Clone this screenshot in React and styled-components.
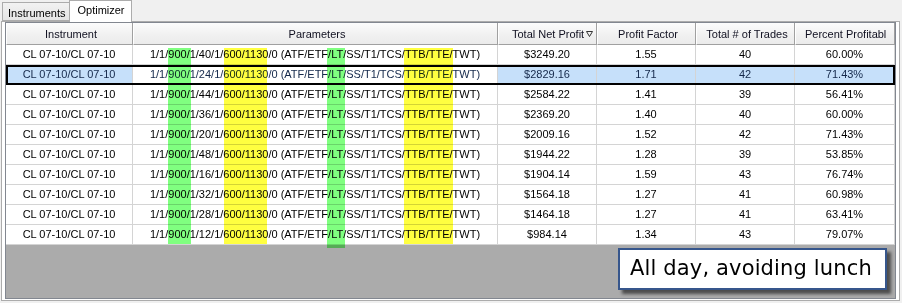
import React from 'react'
import styled, { createGlobalStyle } from 'styled-components';

const GlobalStyle = createGlobalStyle`
    html, body {
        margin: 0;
        padding: 0;
        background: #f0f0f0;
    }
    body {
        font-family: "Liberation Sans", Arial, sans-serif;
        font-size: 11px;
        color: #000;
    }
`;

const COLS = '127px 365px 99px 99px 99px 100px';

const Window = styled.div`
    width: 902px;
    height: 303px;
    overflow: hidden;
    background: #f0f0f0;
`;

const TabStrip = styled.div`
    display: flex;
    align-items: flex-end;
    height: 21px;
    padding-left: 2px;
`;

const Tab = styled.div`
    box-sizing: border-box;
    height: ${({ active }) => (active ? '22px' : '19px')};
    margin-bottom: ${({ active }) => (active ? '-1px' : '0')};
    margin-left: ${({ active }) => (active ? '-1px' : '0')};
    padding: ${({ active }) => (active ? '3px 6px 0 7px' : '4px 4px 0 5px')};
    border: 1px solid #acacac;
    border-bottom: ${({ active }) => (active ? 'none' : '1px solid #acacac')};
    background: ${({ active }) => (active ? '#ffffff' : 'linear-gradient(#f2f2f2, #e5e5e5)')};
    position: relative;
    z-index: ${({ active }) => (active ? 2 : 1)};
    white-space: nowrap;
`;

const Panel = styled.div`
    box-sizing: border-box;
    width: 899px;
    margin-left: 1px;
    height: 280px;
    padding: 0 3px 2px 3px;
    border: 1px solid #acacac;
    background: #ffffff;
`;

const Grid = styled.div`
    box-sizing: border-box;
    height: 277px;
    border: 1px solid #828790;
    background: #ababab;
    display: flex;
    flex-direction: column;
`;

const HeaderRow = styled.div`
    display: grid;
    grid-template-columns: ${COLS};
    height: 22px;
`;

const HeaderCell = styled.div`
    box-sizing: border-box;
    display: flex;
    align-items: center;
    justify-content: ${({ left }) => (left ? 'flex-start' : 'center')};
    padding: ${({ left }) => (left ? `0 ${left.r}px 0 ${left.l}px` : '0 0 0 3px')};
    border-left: 1px solid #ffffff;
    border-right: 1px solid #a0a0a0;
    border-bottom: 1px solid #a0a0a0;
    background: linear-gradient(#fcfcfc, #f1f1f1 55%, #ebebeb);
    color: #101020;
    white-space: nowrap;
    overflow: hidden;
`;

const SortGlyph = styled.svg`
    width: 7px;
    height: 6px;
    margin-left: 2px;
    flex: none;
`;

const Rows = styled.div`
    position: relative;
    background: #ffffff;
`;

const Row = styled.div`
    display: grid;
    grid-template-columns: ${COLS};
    height: 20px;
    background: ${({ selected }) => (selected ? '#c6e0fa' : '#ffffff')};
    color: ${({ selected }) => (selected ? '#14284a' : '#000000')};
    outline: ${({ selected }) => (selected ? '2px solid #000' : 'none')};
    outline-offset: -2px;
    position: relative;
`;

const Cell = styled.div`
    box-sizing: border-box;
    display: flex;
    align-items: center;
    justify-content: center;
    border-right: 1px solid #d4d4d4;
    border-bottom: 1px solid #d4d4d4;
    background: ${({ plain }) => (plain ? '#ffffff' : 'transparent')};
    white-space: nowrap;
    padding-bottom: 1px;
`;

const Band = styled.div`
    position: absolute;
    top: 3px;
    left: ${({ x }) => x}px;
    width: ${({ w }) => w}px;
    height: ${({ h }) => h || 196}px;
    background: ${({ color }) => color};
    mix-blend-mode: multiply;
    pointer-events: none;
    z-index: 3;
`;

const EmptyArea = styled.div`
    flex: 1;
    display: flex;
    justify-content: flex-end;
    align-items: flex-start;
    padding: 3px 8px 0 0;
`;

const Callout = styled.div`
    box-sizing: border-box;
    width: 269px;
    height: 42px;
    display: flex;
    align-items: center;
    padding: 0 0 2px 10px;
    background: #ffffff;
    border: 2px solid #36568c;
    box-shadow: 4px 4px 3px rgba(0, 0, 0, 0.55);
    font-family: "DejaVu Sans", Verdana, sans-serif;
    font-size: 21px;
    letter-spacing: 0.15px;
    color: #000;
    white-space: nowrap;
`;

const results = [
    ['40', '$3249.20', '1.55', '40', '60.00%'],
    ['24', '$2829.16', '1.71', '42', '71.43%'],
    ['44', '$2584.22', '1.41', '39', '56.41%'],
    ['36', '$2369.20', '1.40', '40', '60.00%'],
    ['20', '$2009.16', '1.52', '42', '71.43%'],
    ['48', '$1944.22', '1.28', '39', '53.85%'],
    ['16', '$1904.14', '1.59', '43', '76.74%'],
    ['32', '$1564.18', '1.27', '41', '60.98%'],
    ['28', '$1464.18', '1.27', '41', '63.41%'],
    ['12', '$984.14', '1.34', '43', '79.07%'],
];

const App = () => {
  return (
    <Window>
      <GlobalStyle />
      <TabStrip>
        <Tab>Instruments</Tab>
        <Tab active>Optimizer</Tab>
      </TabStrip>
      <Panel>
        <Grid>
          <HeaderRow>
            <HeaderCell>Instrument</HeaderCell>
            <HeaderCell>Parameters</HeaderCell>
            <HeaderCell left={{ l: 13, r: 0 }}>
              Total Net Profit
              <SortGlyph viewBox="0 0 7 6">
                <polygon points="0.5,0.5 6.5,0.5 3.5,5.5" fill="none" stroke="#333" strokeWidth="1" />
              </SortGlyph>
            </HeaderCell>
            <HeaderCell>Profit Factor</HeaderCell>
            <HeaderCell>Total # of Trades</HeaderCell>
            {/* the grid shows this header cut short, as in the screenshot */}
            <HeaderCell left={{ l: 9, r: 0 }}>Percent Profitabl</HeaderCell>
          </HeaderRow>
          <Rows>
            {results.map((r, i) => (
              <Row key={i} selected={i === 1}>
                <Cell>CL 07-10/CL 07-10</Cell>
                <Cell plain>{`1/1/900/1/${r[0]}/1/600/1130/0 (ATF/ETF/LT/SS/T1/TCS/TTB/TTE/TWT)`}</Cell>
                <Cell>{r[1]}</Cell>
                <Cell>{r[2]}</Cell>
                <Cell>{r[3]}</Cell>
                <Cell>{r[4]}</Cell>
              </Row>
            ))}
            <Band x={162} w={23} color="#80ff80" />
            <Band x={218} w={43} color="#ffff40" />
            <Band x={321} w={18} h={200} color="#80ff80" />
            <Band x={398} w={49} color="#ffff40" />
          </Rows>
          <EmptyArea>
            <Callout>All day, avoiding lunch</Callout>
          </EmptyArea>
        </Grid>
      </Panel>
    </Window>
  )
}

export default App
